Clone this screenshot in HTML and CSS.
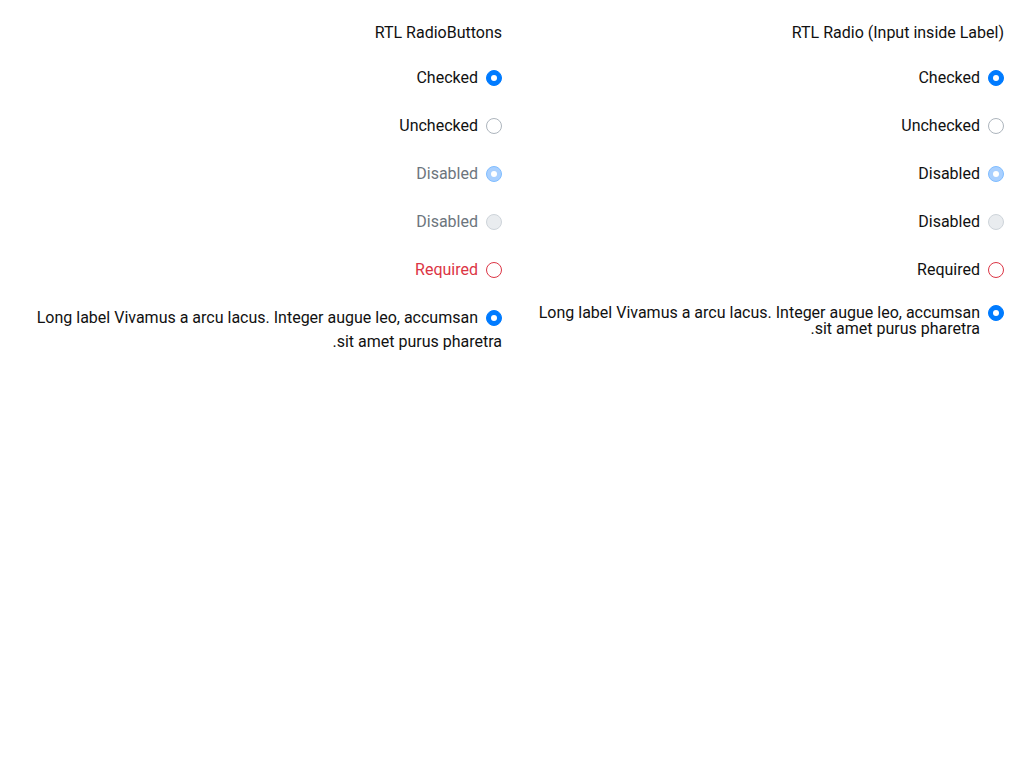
FILE: index.html
```html
<!DOCTYPE html>
<html>
<head>
<meta charset="utf-8">
<link rel="stylesheet" href="styles.css">
</head>
<body>
<div class="page">
  <section class="col">
    <div class="title">RTL RadioButtons</div>
    <div class="row"><span class="radio checked"></span><span class="lbl">Checked</span></div>
    <div class="row"><span class="radio"></span><span class="lbl">Unchecked</span></div>
    <div class="row"><span class="radio checked disabled"></span><span class="lbl muted">Disabled</span></div>
    <div class="row"><span class="radio disabled"></span><span class="lbl muted">Disabled</span></div>
    <div class="row"><span class="radio invalid"></span><span class="lbl danger">Required</span></div>
    <div class="row"><span class="radio checked"></span><span class="lbl">Long label Vivamus a arcu lacus. Integer augue leo, accumsan sit amet purus pharetra.</span></div>
  </section>
  <section class="col">
    <div class="title">RTL Radio (Input inside Label)</div>
    <label class="frow"><span class="radio checked"></span><span class="ftext">Checked</span></label>
    <label class="frow"><span class="radio"></span><span class="ftext">Unchecked</span></label>
    <label class="frow"><span class="radio checked disabled"></span><span class="ftext">Disabled</span></label>
    <label class="frow"><span class="radio disabled"></span><span class="ftext">Disabled</span></label>
    <label class="frow"><span class="radio invalid"></span><span class="ftext">Required</span></label>
    <label class="frow long"><span class="radio checked"></span><span class="ftext">Long label Vivamus a arcu lacus. Integer augue leo, accumsan sit amet purus pharetra.</span></label>
  </section>
</div>
</body>
</html>
```
FILE: styles.css
```css
html, body { margin: 0; padding: 0; background: #fff; }
body {
  font-family: Roboto, "Liberation Sans", sans-serif;
  font-size: 16px;
  color: #111;
}
.page {
  display: grid;
  grid-template-columns: 1fr 1fr;
  column-gap: 20px;
  padding: 21px 20px 20px;
}
.col { direction: rtl; }
.title {
  line-height: 24px;
  margin-bottom: 9px;
}
.row {
  padding: 12px 0;
  line-height: 24px;
}
.row .radio {
  display: inline-block;
  vertical-align: -3px;
  margin-left: 8px;
}
.radio {
  box-sizing: border-box;
  width: 16px;
  height: 16px;
  border-radius: 50%;
  border: 1px solid #adb5bd;
  background: #fff;
  position: relative;
  flex: none;
}
.radio.checked {
  background: #007bff;
  border-color: #007bff;
}
.radio.checked::after {
  content: "";
  position: absolute;
  left: 4px; top: 4px;
  width: 6px; height: 6px;
  border-radius: 50%;
  background: #fff;
}
.radio.disabled {
  background: #e9ecef;
  border-color: #ced4da;
}
.radio.checked.disabled {
  background: #a9d0ff;
  border-color: #80bdff;
}
.radio.invalid { border-color: #dc3545; }
.muted { color: #6c757d; }
.danger { color: #dc3545; }
.frow {
  display: flex;
  align-items: flex-start;
  gap: 8px;
  padding: 16px 0;
  line-height: 16px;
}
.frow.long { padding-top: 11px; }
```
